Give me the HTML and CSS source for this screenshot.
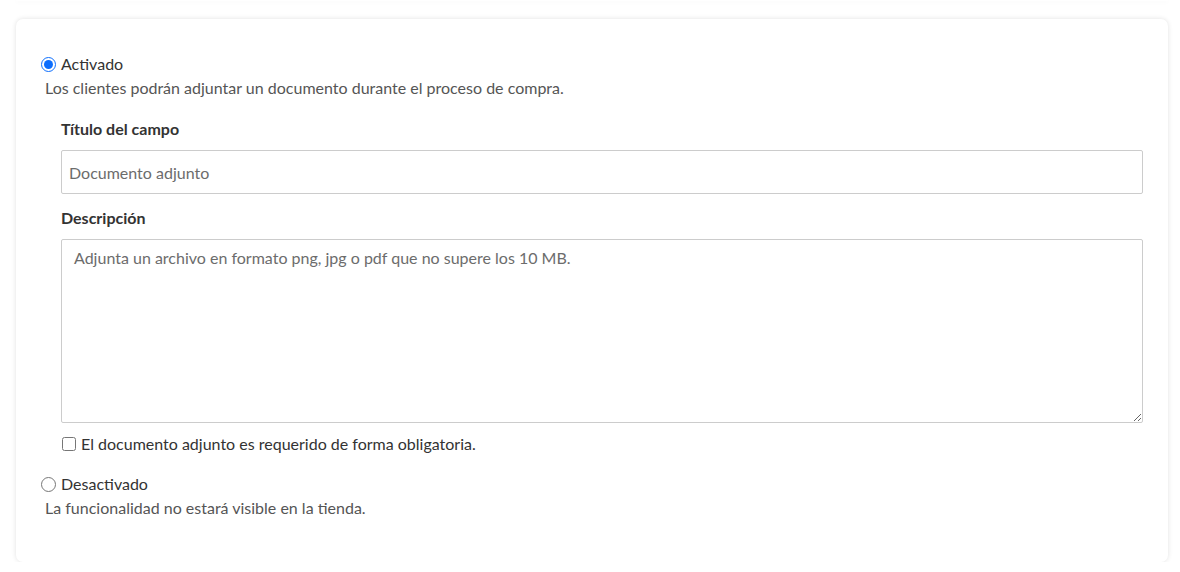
FILE: index.html
```html
<!DOCTYPE html>
<html lang="es">
<head>
<meta charset="utf-8">
<link rel="stylesheet" href="styles.css">
</head>
<body>
<div class="top-shadow"></div>
<div class="card">
  <div class="option">
    <label class="radio-row">
      <input type="radio" name="state" checked>
      <span>Activado</span>
    </label>
    <p class="help">Los clientes podrán adjuntar un documento durante el proceso de compra.</p>
    <div class="fields">
      <label class="field-label">Título del campo</label>
      <input class="text-input" type="text" placeholder="Documento adjunto">
      <label class="field-label desc-label">Descripción</label>
      <textarea class="text-area" placeholder="Adjunta un archivo en formato png, jpg o pdf que no supere los 10 MB."></textarea>
      <label class="check-row">
        <input type="checkbox">
        <span>El documento adjunto es requerido de forma obligatoria.</span>
      </label>
    </div>
  </div>
  <div class="option">
    <label class="radio-row">
      <input type="radio" name="state">
      <span>Desactivado</span>
    </label>
    <p class="help">La funcionalidad no estará visible en la tienda.</p>
  </div>
</div>
</body>
</html>
```
FILE: styles.css
```css
* { box-sizing: border-box; }
html, body { margin: 0; padding: 0; background: #fff; }
body {
  font-family: Lato, "Liberation Sans", sans-serif;
  font-size: 16px;
  color: #333;
  padding: 0 12px 0 16px;
  display: flex;
  flex-direction: column;
}
.top-shadow {
  height: 1px;
  box-shadow: 0 1px 4px rgba(0,0,0,0.06);
}
.card {
  margin-top: 18px;
  width: 1152px;
  height: 543px;
  background: #fff;
  border-radius: 7px;
  box-shadow: 0 0 5px rgba(0,0,0,0.12);
  padding: 35px 25px 0 25px;
}
.radio-row {
  display: flex;
  align-items: center;
  gap: 5px;
  height: 20px;
  line-height: 20px;
  color: #333;
}
.radio-row input {
  margin: 0;
  width: 15px;
  height: 15px;
  accent-color: #0d6efd;
}
.help {
  margin: 4px 0 0 4px;
  color: #555;
  line-height: 20px;
}
.fields {
  padding-left: 20px;
  display: flex;
  flex-direction: column;
}
.field-label {
  font-weight: 700;
  line-height: 20px;
  margin-top: 21px;
  color: #333;
}
.text-input {
  margin-top: 11px;
  height: 44px;
  width: 1082px;
  border: 1px solid #ccc;
  border-radius: 2px;
  padding: 0 7px;
  font-family: inherit;
  font-size: 16px;
  color: #333;
}
.desc-label { margin-top: 14px; }
.text-area {
  margin-top: 11px;
  height: 184px;
  width: 1082px;
  border: 1px solid #ccc;
  border-radius: 2px;
  padding: 8px 12px;
  font-family: inherit;
  font-size: 16px;
  line-height: 20px;
  color: #333;
  resize: both;
}
.text-input::placeholder, .text-area::placeholder { color: #6c6c6c; opacity: 1; }
.check-row {
  display: flex;
  align-items: center;
  gap: 5px;
  margin-top: 11px;
  height: 20px;
  line-height: 20px;
}
.check-row input {
  margin: 0 0 0 1px;
  width: 14px;
  height: 14px;
}
.option + .option { margin-top: 20px; }
```
